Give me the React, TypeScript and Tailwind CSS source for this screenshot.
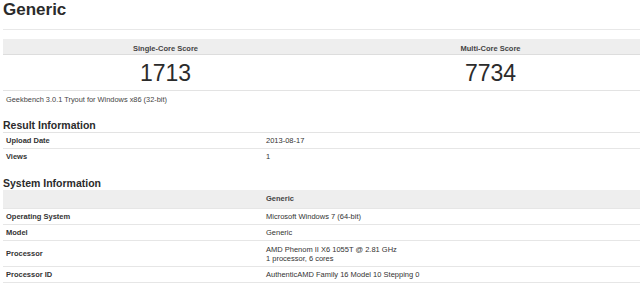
import React from "react";

const rowsSys: { label: string; value: string[]; tall?: boolean }[] = [
  { label: "Operating System", value: ["Microsoft Windows 7 (64-bit)"] },
  { label: "Model", value: ["Generic"] },
  { label: "Processor", value: ["AMD Phenom II X6 1055T @ 2.81 GHz", "1 processor, 6 cores"], tall: true },
  { label: "Processor ID", value: ["AuthenticAMD Family 16 Model 10 Stepping 0"] },
];

export default function App() {
  return (
    <div className="w-[640px] h-[307px] overflow-hidden bg-white text-[#333] font-['Liberation_Sans',Arial,sans-serif]">
      <div className="w-[650px] ml-[3px]">
        <h1 className="text-[17px] leading-[20px] font-bold text-[#2b2b2b]">Generic</h1>
        <div className="mt-[9px] border-t border-[#e8e8e8]" />

        {/* Scores */}
        <div className="mt-[9px]">
          <div className="grid grid-cols-2 h-[16px] bg-[#eeeeee] border-b border-[#dddddd] text-[7.5px] leading-[11px] pt-[4px] font-bold text-[#444]">
            <div className="text-center">Single-Core Score</div>
            <div className="text-center">Multi-Core Score</div>
          </div>
          <div className="grid grid-cols-2 pt-[5px] pb-[4px] text-[23px] leading-[26px] border-b border-[#e3e3e3] text-[#2b2b2b]">
            <div className="text-center">1713</div>
            <div className="text-center">7734</div>
          </div>
          <div className="pt-[3px] px-[3px] text-[7.4px] leading-[12px] text-[#444]">
            Geekbench 3.0.1 Tryout for Windows x86 (32-bit)
          </div>
        </div>

        {/* Result Information */}
        <h2 className="mt-[13px] text-[10.5px] leading-[13px] font-bold text-[#2b2b2b] border-b border-[#e3e3e3]">
          Result Information
        </h2>
        <div className="text-[7.5px]">
          <div className="flex h-[16px] items-center border-b border-[#e6e6e6]">
            <div className="w-[40%] px-[3px] font-bold">Upload Date</div>
            <div className="flex-1 px-[3px]">2013-08-17</div>
          </div>
          <div className="flex h-[15px] items-center">
            <div className="w-[40%] px-[3px] font-bold">Views</div>
            <div className="flex-1 px-[3px]">1</div>
          </div>
        </div>

        {/* System Information */}
        <h2 className="mt-[13px] text-[10.5px] leading-[13px] font-bold text-[#2b2b2b]">
          System Information
        </h2>
        <div className="text-[7.5px]">
          <div className="flex h-[19px] items-center bg-[#eeeeee] border-b border-[#e6e6e6]">
            <div className="w-[40%] px-[3px]" />
            <div className="flex-1 px-[3px] font-bold text-[#444]">Generic</div>
          </div>
          {rowsSys.map((r) => (
            <div
              key={r.label}
              className={`flex items-center border-b border-[#e6e6e6] ${r.tall ? "h-[26px]" : "h-[16px]"}`}
            >
              <div className="w-[40%] px-[3px] font-bold">{r.label}</div>
              <div className="flex-1 px-[3px] leading-[9px]">
                {r.value.map((v) => (
                  <div key={v}>{v}</div>
                ))}
              </div>
            </div>
          ))}
        </div>
      </div>
    </div>
  );
}
